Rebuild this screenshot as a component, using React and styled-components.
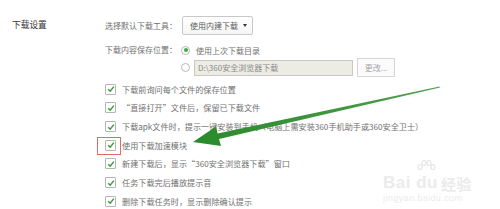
import React from "react";
import styled, { createGlobalStyle } from "styled-components";

const Global = createGlobalStyle`
  html, body { margin: 0; padding: 0; background: #fff; }
  body { font-family: "Noto Sans CJK SC", "Noto Sans", sans-serif; width: 500px; height: 209px; overflow: hidden; }
`;

const Page = styled.div`
  position: relative;
  width: 500px;
  height: 209px;
  display: flex;
  font-size: 8px;
  color: #707070;
`;

const SectionLabel = styled.div`
  width: 93px;
  padding: 19px 0 0 12px;
  font-size: 8.7px;
  color: #333;
  line-height: 12px;
`;

const Body = styled.div`
  display: flex;
  flex-direction: column;
  padding-top: 16px;
`;

const Row = styled.div`
  display: flex;
  align-items: center;
  height: ${(p) => p.h || 12}px;
  margin-top: ${(p) => p.mt || 0}px;
  margin-left: ${(p) => p.indent || 0}px;
`;

const FieldLabel = styled.span`
  width: ${(p) => p.w}px;
  line-height: 12px;
  white-space: nowrap;
  color: #707070;
`;

const Select = styled.div`
  box-sizing: border-box;
  width: 71px;
  height: 19px;
  margin-left: 1px;
  border: 1px solid #c8c8c8;
  border-radius: 2px;
  background: linear-gradient(#fff, #f6f6f6);
  display: flex;
  align-items: center;
  padding-left: 7px;
  color: #5a5a5a;
  justify-content: space-between;
  padding-right: 5px;
`;

const Caret = styled.span`
  width: 0;
  height: 0;
  border-left: 2.5px solid transparent;
  border-right: 2.5px solid transparent;
  border-top: 3.5px solid #333;
`;

const Radio = styled.span`
  box-sizing: border-box;
  width: 9px;
  height: 9px;
  border-radius: 50%;
  border: 1px solid #b8b8b8;
  background: #fff;
  display: inline-flex;
  align-items: center;
  justify-content: center;
  margin-right: ${(p) => p.mr || 6}px;
  &::after {
    content: "";
    width: 4px;
    height: 4px;
    border-radius: 50%;
    background: ${(p) => (p.checked ? "#3fa83f" : "transparent")};
  }
`;

const PathInput = styled.div`
  box-sizing: border-box;
  width: 159px;
  height: 16px;
  border: 1px solid #c9c9c0;
  background: #ecece4;
  color: #8a8a8a;
  padding-left: 3px;
  display: flex;
  align-items: center;
  white-space: nowrap;
`;

const Button = styled.div`
  box-sizing: border-box;
  width: 38px;
  height: 19px;
  margin-left: 4px;
  border: 1px solid #d6d6d6;
  background: #fbfbfb;
  color: #a8a8a8;
  display: flex;
  align-items: center;
  justify-content: center;
`;

const CheckList = styled.div`
  display: flex;
  flex-direction: column;
  margin-top: 3px;
  font-size: 8.15px;
`;

const CheckRow = styled.div`
  position: relative;
  display: flex;
  align-items: center;
  height: 18.67px;
  white-space: nowrap;
  &::before {
    content: "";
    display: ${(p) => (p.marked ? "block" : "none")};
    position: absolute;
    left: -8px;
    top: 1px;
    width: 24px;
    height: 18px;
    border: 1px solid #e46a6a;
    box-sizing: border-box;
  }
`;

const Box = styled.span`
  box-sizing: border-box;
  width: 11px;
  height: 11px;
  border: 1px solid #b5b5b5;
  border-radius: 1px;
  background: #fff;
  margin-right: 6px;
  display: inline-flex;
  align-items: center;
  justify-content: center;
`;

const Overlay = styled.svg`
  position: absolute;
  left: 0;
  top: 0;
  pointer-events: none;
`;

const Watermark = styled.div`
  position: absolute;
  left: 383px;
  top: 174px;
  color: #ebebeb;
  font-family: "Liberation Sans", sans-serif;
  line-height: 1;
`;

const WmMain = styled.div`
  position: relative;
  display: flex;
  align-items: flex-end;
  font-size: 17px;
  font-weight: bold;
  letter-spacing: 0.5px;
`;

const Paw = styled.svg`
  position: absolute;
  left: 33px;
  top: -14px;
`;

const WmCn = styled.span`
  font-family: "Noto Sans CJK SC", sans-serif;
  font-size: 15px;
  margin-left: 3px;
`;

const WmUrl = styled.div`
  font-size: 9px;
  margin-top: 3px;
  letter-spacing: 0.4px;
`;

const Check = () => (
  <svg width="8" height="8" viewBox="0 0 8 8">
    <path d="M1.2 4.2 L3.2 6.2 L6.8 1.6" fill="none" stroke="#3f9a3f" strokeWidth="1.5" />
  </svg>
);

const items = [
  "下载前询问每个文件的保存位置",
  "“直接打开”文件后，保留已下载文件",
  "下载apk文件时，提示一键安装到手机（电脑上需安装360手机助手或360安全卫士）",
  "使用下载加速模块",
  "新建下载后，显示“360安全浏览器下载”窗口",
  "任务下载完后播放提示音",
  "删除下载任务时，显示删除确认提示",
];

export default function App() {
  return (
    <>
      <Global />
      <Page>
        <SectionLabel>下载设置</SectionLabel>
        <Body>
          <Row h={19}>
            <FieldLabel w={76}>选择默认下载工具：</FieldLabel>
            <Select>
              使用内建下载
              <Caret />
            </Select>
          </Row>
          <Row mt={9}>
            <FieldLabel w={76}>下载内容保存位置：</FieldLabel>
            <Radio checked />
            使用上次下载目录
          </Row>
          <Row h={19} mt={2} indent={76}>
            <Radio mr={4} />
            <PathInput>D:\360安全浏览器下载</PathInput>
            <Button>更改...</Button>
          </Row>
          <CheckList>
            {items.map((t, i) => (
              <CheckRow key={i} marked={i === 3}>
                <Box>
                  <Check />
                </Box>
                {t}
              </CheckRow>
            ))}
          </CheckList>
        </Body>
        <Watermark>
          <WmMain>
            <Paw width="20" height="16" viewBox="0 0 20 16">
              <g fill="none" stroke="#e6e6e6" strokeWidth="1.2">
                <ellipse cx="4" cy="7" rx="2" ry="2.5" />
                <ellipse cx="8" cy="3" rx="2" ry="2.5" />
                <ellipse cx="13" cy="3" rx="2" ry="2.5" />
                <ellipse cx="17" cy="7" rx="2" ry="2.5" />
              </g>
            </Paw>
            Bai du<WmCn>经验</WmCn>
          </WmMain>
          <WmUrl>jingyan.baidu.com</WmUrl>
        </Watermark>
        <Overlay width="500" height="209">
          <defs>
            <linearGradient id="ag" x1="0" y1="0" x2="1" y2="0">
              <stop offset="0" stopColor="#2a8a2a" />
              <stop offset="1" stopColor="#4f9f4f" />
            </linearGradient>
          </defs>
          <polygon
            points="193,142 221,146 219,139 440,87.6 439.6,86.4 217.7,133.5 216,126.5"
            fill="url(#ag)"
          />
        </Overlay>
      </Page>
    </>
  );
}
